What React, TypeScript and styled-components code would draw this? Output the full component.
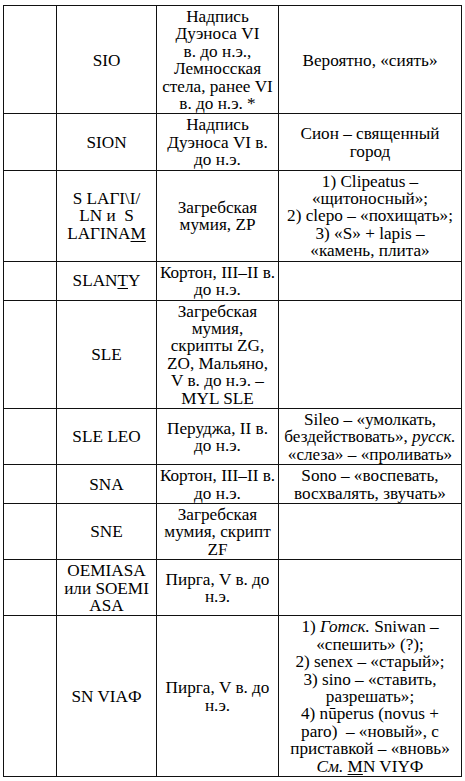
import React from "react";
import styled, { createGlobalStyle } from "styled-components";

const Global = createGlobalStyle`
  html, body { margin: 0; padding: 0; background: #fff; }
  body { font-family: "Liberation Serif", "Times New Roman", serif; color: #000; }
`;

const Page = styled.div`
  padding: 5px 4px 0 3px;
`;

const Table = styled.table`
  border-collapse: collapse;
  table-layout: fixed;
  width: 458px;
`;

const Col = styled.col<{ $w: number }>`
  width: ${(p) => p.$w}px;
`;

const Cell = styled.td`
  border: 1px solid #111;
  padding: 2px 1px 1px;
  text-align: center;
  vertical-align: middle;
  font-family: "Liberation Serif", "Times New Roman", serif;
  font-size: 17.2px;
  line-height: 17.4px;
  color: #000;
  white-space: nowrap;
`;

const U = styled.span`
  text-decoration: underline;
  text-underline-offset: 2px;
`;

const I = styled.i`
  font-style: italic;
`;

type Row = { a: React.ReactNode; b: React.ReactNode; c: React.ReactNode };

const br = <br />;

const rows: Row[] = [
  {
    a: "SIO",
    b: (
      <>
        Надпись{br}Дуэноса VI{br}в. до н.э.,{br}Лемносская{br}стела, ранее VI{br}в. до н.э. *
      </>
    ),
    c: "Вероятно, «сиять»",
  },
  {
    a: "SION",
    b: (
      <>
        Надпись{br}Дуэноса VI в.{br}до н.э.
      </>
    ),
    c: (
      <>
        Сион – священный{br}город
      </>
    ),
  },
  {
    a: (
      <>
        S LAΓI\I/{br}LN и&nbsp; S{br}LAΓINA<U>M</U>
      </>
    ),
    b: (
      <>
        Загребская{br}мумия, ZP
      </>
    ),
    c: (
      <>
        1) Clipeatus –{br}«щитоносный»;{br}2) clepo – «похищать»;{br}3) «S» + lapis –{br}«камень, плита»
      </>
    ),
  },
  {
    a: (
      <>
        SLAN<U>T</U>Y
      </>
    ),
    b: (
      <>
        Кортон, III–II в.{br}до н.э.
      </>
    ),
    c: "",
  },
  {
    a: "SLE",
    b: (
      <>
        Загребская{br}мумия,{br}скрипты ZG,{br}ZO, Мальяно,{br}V в. до н.э. –{br}MYL SLE
      </>
    ),
    c: "",
  },
  {
    a: "SLE LEO",
    b: (
      <>
        Перуджа, II в.{br}до н.э.
      </>
    ),
    c: (
      <>
        Sileo – «умолкать,{br}бездействовать», <I>русск.</I>{br}«слеза» – «проливать»
      </>
    ),
  },
  {
    a: "SNA",
    b: (
      <>
        Кортон, III–II в.{br}до н.э.
      </>
    ),
    c: (
      <>
        Sono – «воспевать,{br}восхвалять, звучать»
      </>
    ),
  },
  {
    a: "SNE",
    b: (
      <>
        Загребская{br}мумия, скрипт{br}ZF
      </>
    ),
    c: "",
  },
  {
    a: (
      <>
        OEMIASA{br}или SOEMI{br}ASA
      </>
    ),
    b: (
      <>
        Пирга, V в. до{br}н.э.
      </>
    ),
    c: "",
  },
  {
    a: "SN VIAФ",
    b: (
      <>
        Пирга, V в. до{br}н.э.
      </>
    ),
    c: (
      <>
        1) <I>Готск.</I> Sniwan –{br}«спешить» (?);{br}2) senex – «старый»;{br}3) sino – «ставить,{br}разрешать»;{br}4) nūperus (novus +{br}paro)&nbsp; – «новый», с{br}приставкой – «вновь»{br}
        <I>См.</I> <U>M</U>N VIYФ
      </>
    ),
  },
];

export default function App() {
  return (
    <Page>
      <Global />
      <Table>
        <colgroup>
          <Col $w={53} />
          <Col $w={100} />
          <Col $w={122} />
          <Col $w={183} />
        </colgroup>
        <tbody>
          {rows.map((r, i) => (
            <tr key={i}>
              <Cell />
              <Cell>{r.a}</Cell>
              <Cell>{r.b}</Cell>
              <Cell>{r.c}</Cell>
            </tr>
          ))}
        </tbody>
      </Table>
    </Page>
  );
}
